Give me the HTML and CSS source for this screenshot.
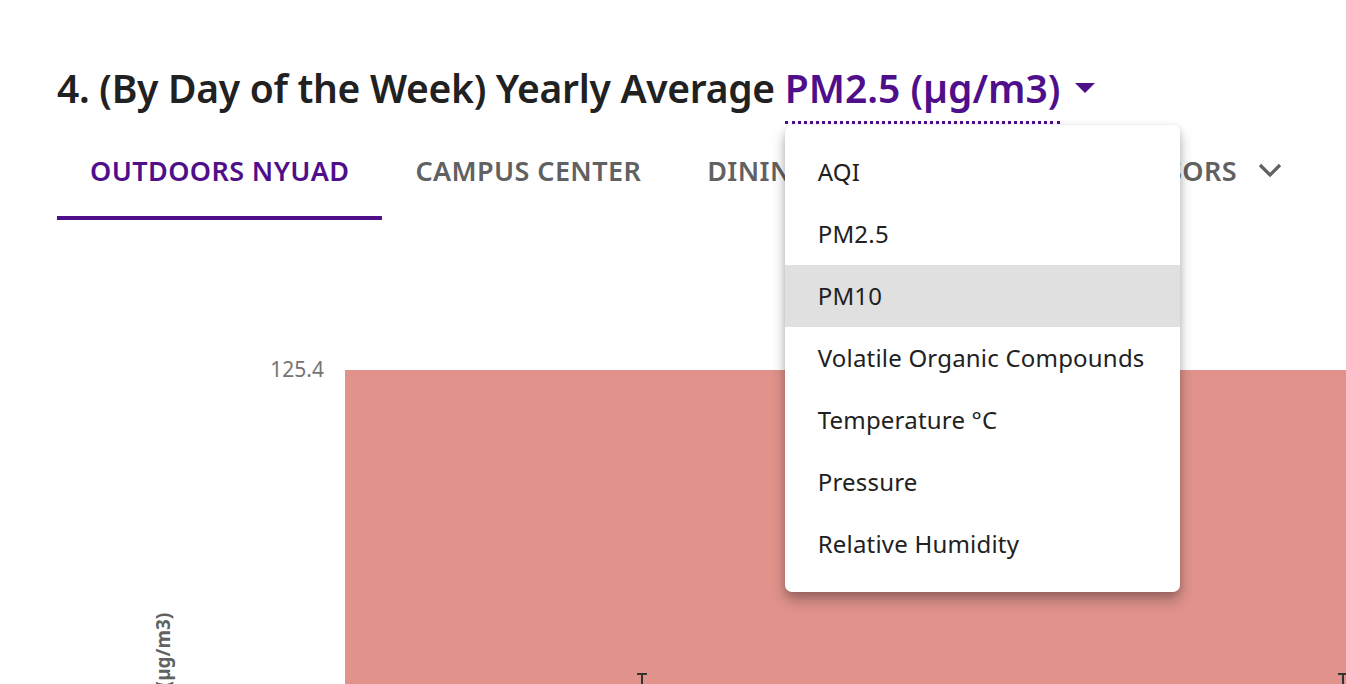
FILE: index.html
```html
<!DOCTYPE html>
<html lang="en">
<head>
<meta charset="utf-8">
<title>Yearly Average by Day of the Week</title>
<link rel="stylesheet" href="styles.css">
</head>
<body>
<div class="page">
  <h2 class="title"><span class="title-text">4. (By Day of the Week) Yearly Average </span><span class="metric-wrap"><span class="metric">PM2.5 (µg/m3)</span><svg class="caret" width="20" height="11" viewBox="0 0 20 11"><path d="M0 0 L20 0 L10 10 Z" fill="#4f0f8b"/></svg>
      <ul class="menu">
        <li class="menu-item">AQI</li>
        <li class="menu-item">PM2.5</li>
        <li class="menu-item is-hover">PM10</li>
        <li class="menu-item">Volatile Organic Compounds</li>
        <li class="menu-item">Temperature °C</li>
        <li class="menu-item">Pressure</li>
        <li class="menu-item">Relative Humidity</li>
      </ul>
    </span></h2>

  <nav class="tabs">
    <div class="tab is-active">OUTDOORS NYUAD</div>
    <div class="tab">CAMPUS CENTER</div>
    <div class="tab">DINING HALL</div>
    <div class="tab tab-more">MORE SENSORS<svg class="chev" width="24" height="15" viewBox="0 0 24 15"><path d="M2 2 L12 12 L22 2" fill="none" stroke="#616161" stroke-width="3.2"/></svg></div>
  </nav>

  <div class="chart">
    <div class="y-axis">
      <div class="y-title">PM2.5 (µg/m3)</div>
      <div class="y-ticks"><span class="tick">125.4</span></div>
    </div>
    <div class="plot">
      <div class="bar bar-sun"><span class="err"></span></div>
      <div class="bar bar-mon"><span class="err"></span></div>
    </div>
  </div>
</div>
</body>
</html>
```

FILE: styles.css
```css
* { box-sizing: border-box; }
html, body { margin: 0; padding: 0; background: #fff; }
body {
  font-family: "Noto Sans", "Open Sans", sans-serif;
  color: #222;
  overflow: hidden;
  width: 1346px;
  height: 684px;
}
.page {
  padding: 60px 0 0 57px;
  position: relative;
  height: 684px;
  overflow: hidden;
}
.title {
  margin: 0;
  font-size: 39px;
  line-height: 48px;
  font-weight: 600;
  color: #212121;
  white-space: nowrap;
}
.title-text { letter-spacing: -0.3px; }
.metric-wrap {
  position: relative;
  display: inline-block;
  color: #4f0f8b;
}
.metric {
  display: inline-block;
  padding-bottom: 5px;
  border-bottom: 3px dotted #4f0f8b;
  line-height: 56px;
}
.caret {
  margin-left: 15px;
  vertical-align: 9px;
}
.menu {
  position: absolute;
  left: 0;
  top: calc(100% + 1px);
  z-index: 5;
  margin: 0;
  padding: 16px 0 17px;
  list-style: none;
  width: 395px;
  background: #fff;
  border-radius: 7px;
  box-shadow: 0 8px 14px rgba(0,0,0,0.28), 0 2px 6px rgba(0,0,0,0.12);
}
.menu-item {
  height: 62px;
  padding-left: 33px;
  display: flex;
  align-items: center;
  font-size: 24px;
  font-weight: 400;
  color: #212121;
  letter-spacing: 0.2px;
}
.menu-item.is-hover { background: #e0e0e0; }

.tabs {
  display: flex;
  margin-top: 12px;
  width: 1258px;
}
.tab {
  padding: 0 33px 11px;
  height: 84px;
  display: flex;
  align-items: center;
  font-size: 27px;
  font-weight: 600;
  letter-spacing: 0.4px;
  color: #616161;
  white-space: nowrap;
  border-bottom: 4px solid transparent;
}
.tab.is-active {
  color: #4f0f8b;
  border-bottom-color: #4f0f8b;
}
.tab-more { margin-left: auto; }
.chev { margin-left: 21px; }

.chart {
  display: flex;
  margin-top: 150px;
  height: 400px;
}
.y-axis {
  width: 288px;
  display: flex;
  flex-shrink: 0;
}
.y-title {
  writing-mode: vertical-rl;
  transform: rotate(180deg);
  font-size: 19px;
  font-weight: 700;
  color: #616161;
  margin-left: 93px;
  height: 400px;
  text-align: center;
  white-space: nowrap;
  align-self: flex-start;
  margin-top: 111px;
}
.y-ticks {
  flex: 1;
  text-align: right;
  padding-right: 21px;
}
.tick {
  display: block;
  font-size: 21px;
  color: #757575;
  line-height: 22px;
  margin-top: -12px;
}
.plot {
  flex: 1;
  display: flex;
  overflow: hidden;
}
.bar {
  position: relative;
  flex-shrink: 0;
  background: #e0928b;
  height: 100%;
}
.bar-sun { width: 594px; }
.bar-mon { width: 808px; }
.err {
  position: absolute;
  left: 50%;
  top: 303px;
  width: 10px;
  height: 30px;
  margin-left: -5px;
  border-top: 2px solid #333;
}
.err::after {
  content: "";
  position: absolute;
  left: 4px;
  top: 0;
  width: 2px;
  height: 30px;
  background: #333;
}
```
